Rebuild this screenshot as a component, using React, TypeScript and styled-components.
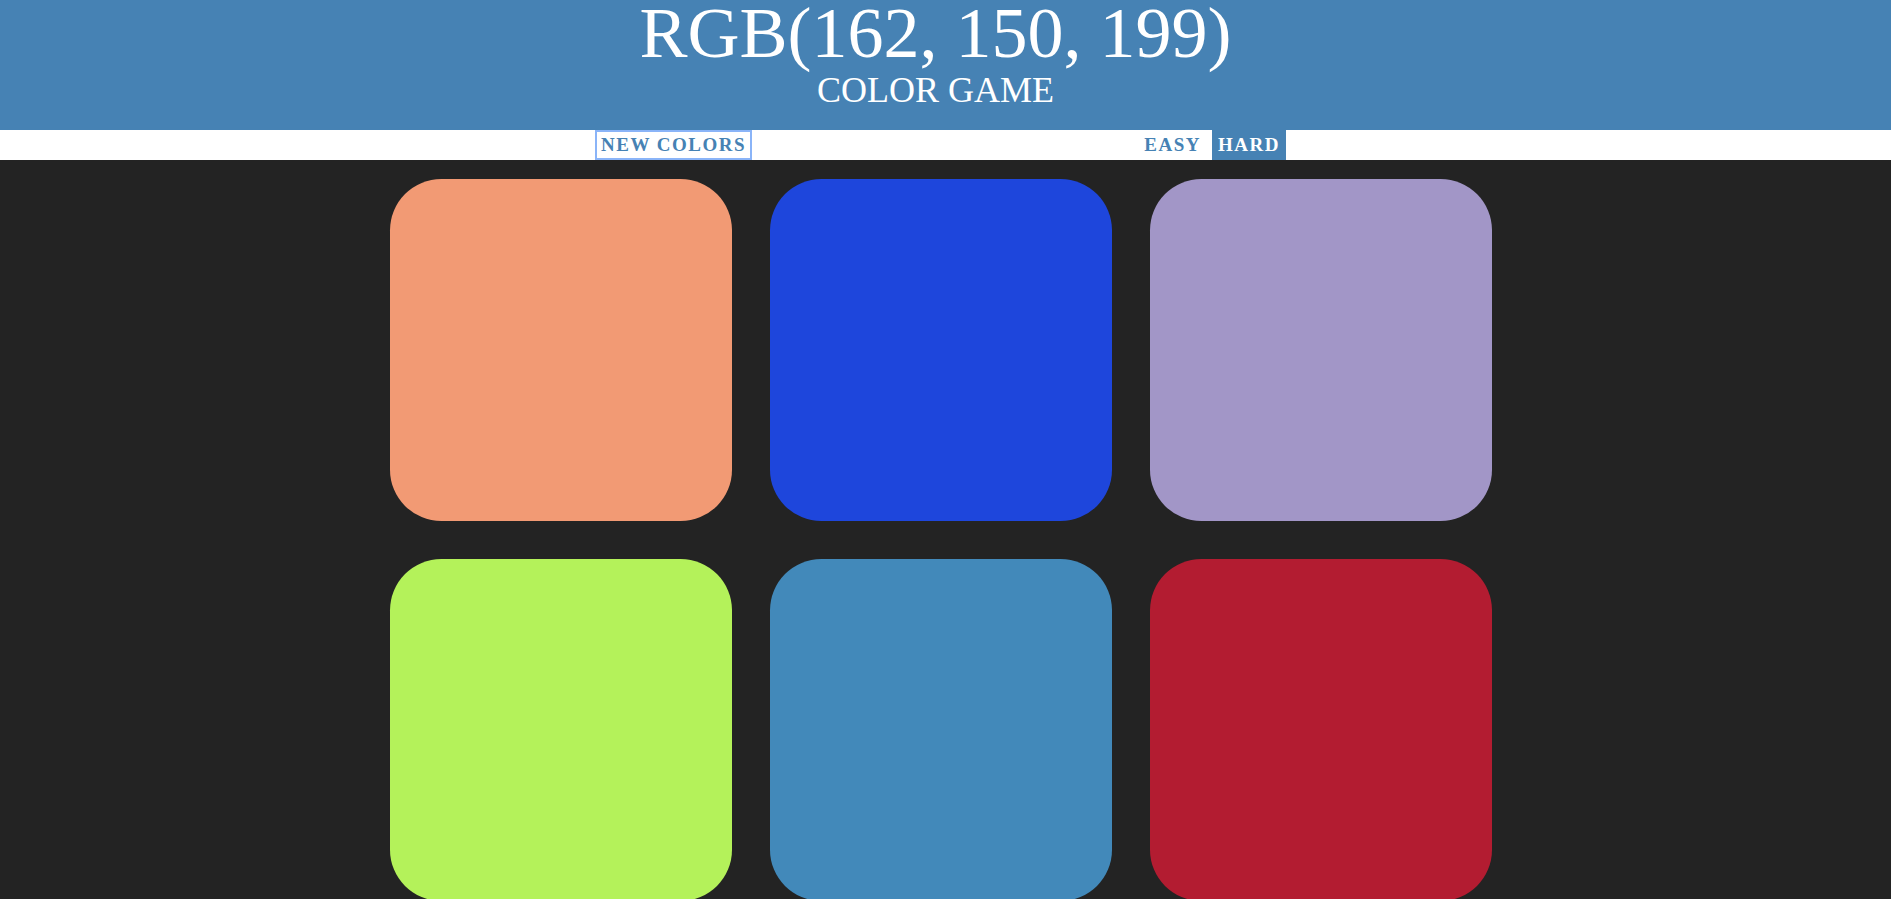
import React from "react";
import styled, { createGlobalStyle } from "styled-components";

const GlobalStyle = createGlobalStyle`
  html, body {
    margin: 0;
    padding: 0;
    background: #232323;
    font-family: "Liberation Serif", "Times New Roman", serif;
  }
`;

const Header = styled.h1`
  margin: 0;
  padding: 0 20px 16px 0;
  background: #4682b4;
  color: #ffffff;
  text-align: center;
  font-weight: normal;
  text-transform: uppercase;
  font-size: 36px;
`;

const ColorDisplay = styled.span`
  display: block;
  font-size: 72px;
  line-height: 66px;
`;

const Title = styled.span`
  display: block;
  line-height: 48px;
`;

const Stripe = styled.div`
  display: flex;
  justify-content: center;
  gap: 5px;
  height: 30px;
  padding-right: 10px;
  background: #ffffff;
`;

const Button = styled.button<{ $selected?: boolean; $focused?: boolean }>`
  height: 100%;
  border: none;
  padding: 0 6px;
  margin: 0;
  font-family: "Liberation Serif", "Times New Roman", serif;
  font-size: 19px;
  font-weight: 700;
  letter-spacing: 1.5px;
  text-transform: uppercase;
  color: ${(p) => (p.$selected ? "#ffffff" : "#4682b4")};
  background: ${(p) => (p.$selected ? "#4682b4" : "transparent")};
  outline: none;
  box-shadow: ${(p) => (p.$focused ? "inset 0 0 0 2px #8ab4f8" : "none")};
  cursor: pointer;
`;

const Message = styled.span`
  display: inline-block;
  width: 20%;
`;

const Board = styled.div`
  display: grid;
  grid-template-columns: repeat(3, 342px);
  gap: 38px;
  justify-content: center;
  padding: 19px 10px 19px 0;
`;

const Square = styled.div<{ $color: string }>`
  width: 342px;
  height: 342px;
  border-radius: 15%;
  background: ${(p) => p.$color};
`;

const colors = [
  "rgb(242, 154, 116)",
  "rgb(30, 70, 220)",
  "rgb(162, 150, 199)",
  "rgb(180, 242, 90)",
  "rgb(66, 137, 186)",
  "rgb(179, 28, 49)",
];

export default function App() {
  return (
    <>
      <GlobalStyle />
      <Header>
        <ColorDisplay>RGB(162, 150, 199)</ColorDisplay>
        <Title>Color Game</Title>
      </Header>
      <Stripe>
        <Button $focused>New Colors</Button>
        <Message />
        <Button>Easy</Button>
        <Button $selected>Hard</Button>
      </Stripe>
      <Board>
        {colors.map((c, i) => (
          <Square key={i} $color={c} />
        ))}
      </Board>
    </>
  );
}
